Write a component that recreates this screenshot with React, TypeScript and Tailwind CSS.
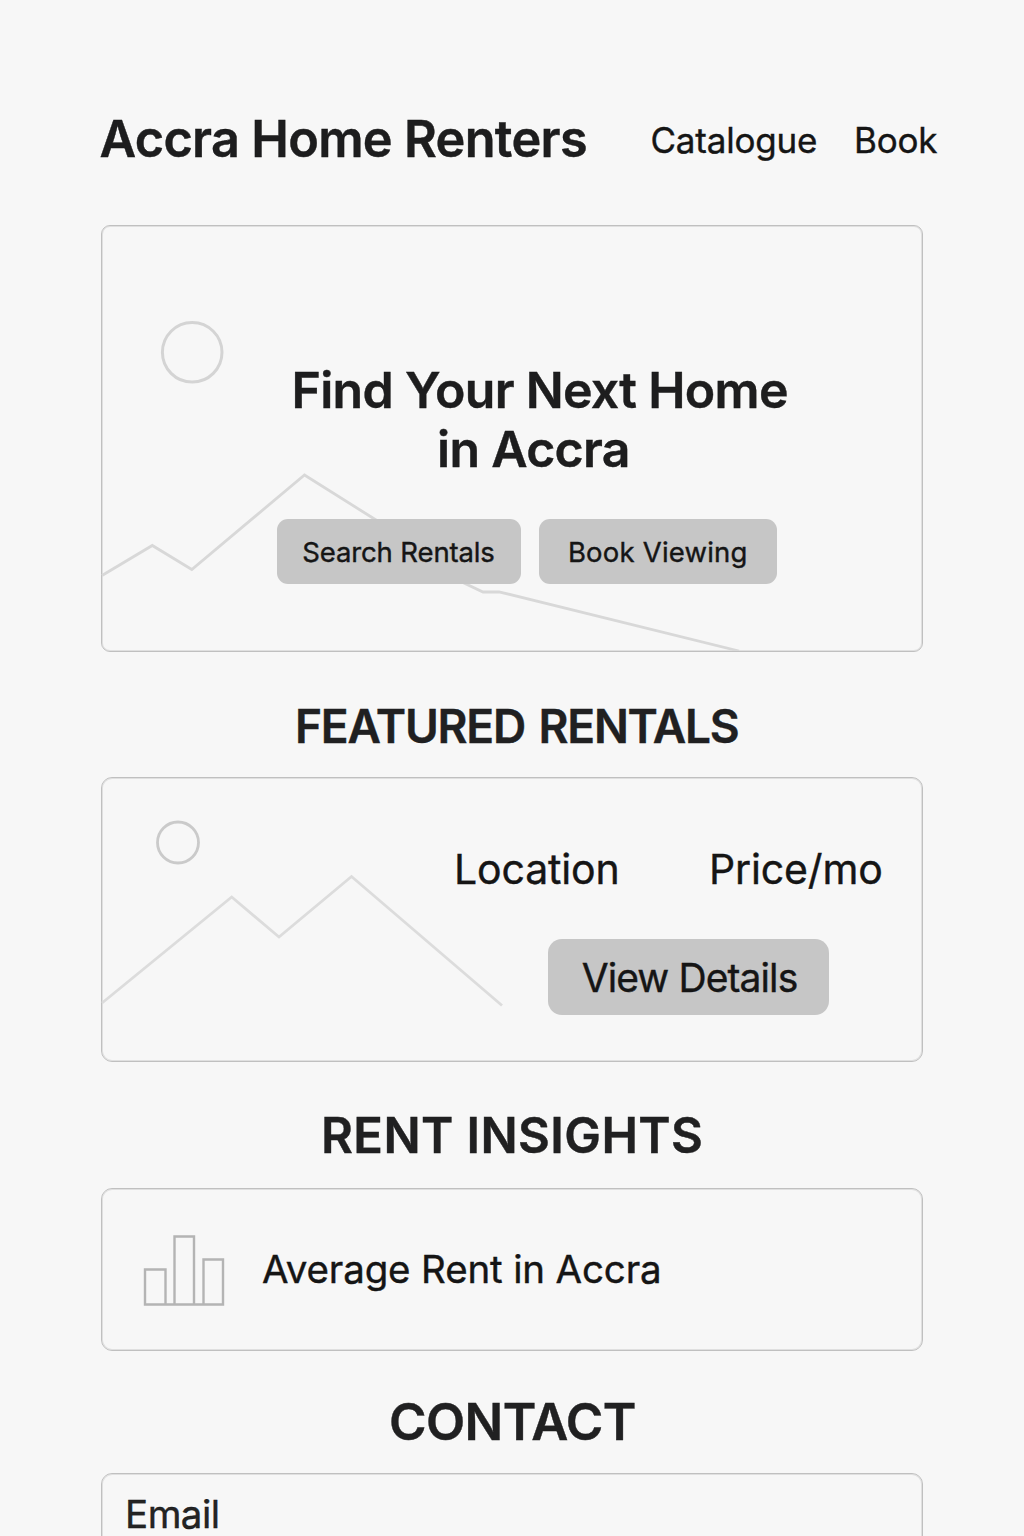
import type { ReactNode } from "react";

function Heading({ className, children }: { className: string; children: ReactNode }) {
  return (
    <h2 className={`flex items-center justify-start font-semibold text-[#202021] [-webkit-text-stroke:0.4px_#202021] ${className}`}>
      {children}
    </h2>
  );
}

export default function App() {
  return (
    <div className="h-[1536px] w-[1024px] overflow-hidden whitespace-nowrap bg-[#f7f7f7] pl-[101px] font-['Inter',sans-serif] text-[#151515] [-webkit-text-stroke:0.4px_#151515]">
      <header className="-ml-[1.5px] flex h-[225px] pt-[109px]">
        <h1 className="h-[60px] w-[551px] text-[50.4px] font-semibold leading-[60px] tracking-[-0.67px] text-[#1d1d1e]">
          Accra Home Renters
        </h1>
        <nav className="flex h-[62px] items-center text-[35px] leading-[42px] tracking-[-0.2px]">
          <a className="w-[203.5px]">Catalogue</a>
          <a>Book</a>
        </nav>
      </header>

      <section className="relative h-[427px] w-[822px] rounded-[9px] border border-[#c0c0c0] shadow-[inset_0_0_0_1px_#e0e0e0]">
        <svg className="absolute -left-px -top-px" width="820" height="426" viewBox="101 225 820 426" fill="none" stroke="#d8d8d8" strokeWidth="2.8">
          <circle cx="192.2" cy="352.3" r="29.8" stroke="#d4d4d4" strokeWidth="3" />
          <path d="M102 575.5 152.3 545.5 191.8 569.5 304.5 475 376 520 464 583 483 592 499 591.8 739 651" />
        </svg>
        <div className="relative pl-[189.5px] pt-[135px]">
          <h2 className="text-[50px] font-semibold leading-[58.5px] tracking-[-0.69px] text-[#1d1d1e]">
            Find Your Next Home
            <br />
            <span className="pl-[145.5px]">in Accra</span>
          </h2>
        </div>
        <div className="relative flex gap-[18.5px] pl-[174.5px] pt-[41px] text-[27.5px]">
          <button className="h-[65px] w-[244px] rounded-[11px] bg-[#c6c6c6] pt-[2px] tracking-[-0.13px]">Search Rentals</button>
          <button className="h-[65px] w-[237.5px] rounded-[11px] bg-[#c6c6c6] pt-[2px] tracking-[0.2px]">Book Viewing</button>
        </div>
      </section>

      <Heading className="h-[125px] pl-[194px] pt-[23px] text-[46px] tracking-[-1.2px] [word-spacing:3px]">FEATURED RENTALS</Heading>

      <section className="relative h-[285px] w-[822px] rounded-[11px] border border-[#c0c0c0] shadow-[inset_0_0_0_1px_#e0e0e0]">
        <svg className="absolute -left-px -top-px" width="420" height="284" viewBox="101 777 420 284" fill="none" stroke="#dcdcdc" strokeWidth="2.8">
          <circle cx="178" cy="842.5" r="20.5" stroke="#cacaca" />
          <path d="M102 1003 231.7 897 279 937 351.5 876.5 502 1005.5" />
        </svg>
        <div className="mt-[67px] flex h-[50px] pl-[352px] text-[41px] leading-[49px] tracking-[-0.15px]">
          <span className="w-[255px]">Location</span>
          <span>Price/mo</span>
        </div>
        <button className="ml-[446px] mt-[44px] h-[76px] w-[281px] rounded-[14px] bg-[#c6c6c6] pl-[2px] pt-[2px] text-[39px] tracking-[-0.9px]">
          View Details
        </button>
      </section>

      <Heading className="h-[126px] pl-[220px] pt-[21px] text-[49px] tracking-[0.4px]">RENT INSIGHTS</Heading>

      <section className="flex h-[163px] w-[822px] items-center rounded-[11px] border border-[#c0c0c0] pl-[41px] shadow-[inset_0_0_0_1px_#e0e0e0]">
        <svg width="84" height="74" viewBox="143 1233 84 74" fill="none" stroke="#b4b4b4" strokeWidth="2.4">
          <path d="M145 1304.5V1269.5H165.5V1304.5M174.5 1304.5V1236.5H194V1304.5M203.5 1304.5V1259.5H223V1304.5M143.8 1304.5H224.2" />
        </svg>
        <span className="pl-[35px] text-[38.5px] tracking-[-0.15px]">Average Rent in Accra</span>
      </section>

      <Heading className="h-[122px] pl-[288px] pt-[21px] text-[51px] tracking-[-0.6px]">CONTACT</Heading>

      <section className="h-[163px] w-[822px] rounded-[11px] border border-[#c0c0c0] pl-[23px] pt-[16px] shadow-[inset_0_0_0_1px_#e0e0e0]">
        <label className="block text-[38.5px] leading-[48px] tracking-[-0.5px] text-[#242424]">Email</label>
      </section>
    </div>
  );
}
